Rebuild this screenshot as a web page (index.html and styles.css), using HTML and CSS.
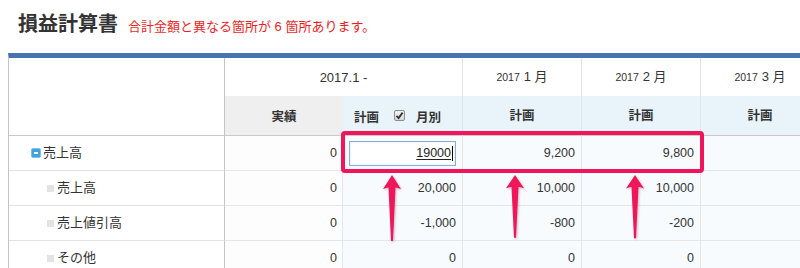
FILE: index.html
```html
<!DOCTYPE html>
<html lang="ja">
<head>
  <meta charset="UTF-8" />
  <meta name="viewport" content="width=device-width,initial-scale=1.0" />
  <title>損益計算書</title>
  <link rel="stylesheet" href="styles.css">
</head>
<body>
  <div class="page">
    <!-- Title -->
    <div class="title-bar">
      <h1 class="title">損益計算書</h1>
      <span class="warning">合計金額と異なる箇所が 6 箇所あります。</span>
    </div>

    <!-- Sheet -->
    <div class="sheet">
      <div class="grid">
        <div class="cell head-blank"></div>
        <div class="cell head-period">2017.1 -</div>
        <div class="cell head-month"><span class="year">2017</span>1 月</div>
        <div class="cell head-month"><span class="year">2017</span>2 月</div>
        <div class="cell head-month"><span class="year">2017</span>3 月</div>

        <div class="cell head-actual">実績</div>
        <div class="cell head-plan head-plan-first">
          <span>計画</span>
          <span class="check">
            <svg width="9" height="9" viewBox="0 0 9 9"><path d="M1.5 4.8 L3.6 7 L7.6 1.6" fill="none" stroke="#333" stroke-width="1.8"/></svg>
          </span>
          <span>月別</span>
        </div>
        <div class="cell head-plan">計画</div>
        <div class="cell head-plan">計画</div>
        <div class="cell head-plan">計画</div>

        <!-- 売上高 (parent) -->
        <div class="cell label label-parent"><span class="toggle"></span>売上高</div>
        <div class="cell num actual">0</div>
        <div class="cell num plan edit"><div class="field"><span class="typed">19000</span><span class="caret"></span></div></div>
        <div class="cell num plan">9,200</div>
        <div class="cell num plan">9,800</div>
        <div class="cell num plan"></div>

        <div class="cell label label-child"><span class="leaf"></span>売上高</div>
        <div class="cell num actual">0</div>
        <div class="cell num plan">20,000</div>
        <div class="cell num plan">10,000</div>
        <div class="cell num plan">10,000</div>
        <div class="cell num plan"></div>

        <div class="cell label label-child"><span class="leaf"></span>売上値引高</div>
        <div class="cell num actual">0</div>
        <div class="cell num plan">-1,000</div>
        <div class="cell num plan">-800</div>
        <div class="cell num plan">-200</div>
        <div class="cell num plan"></div>

        <div class="cell label label-child"><span class="leaf"></span>その他</div>
        <div class="cell num actual">0</div>
        <div class="cell num plan">0</div>
        <div class="cell num plan">0</div>
        <div class="cell num plan">0</div>
        <div class="cell num plan"></div>
      </div>
    </div>

    <!-- Annotation overlay -->
    <svg class="annotation" width="800" height="268" viewBox="0 0 800 268">
      <defs>
        <filter id="shadow" x="-50%" y="-20%" width="200%" height="140%">
          <feDropShadow dx="1" dy="1" stdDeviation="1" flood-color="#000" flood-opacity="0.25"/>
        </filter>
        <path id="arrow" d="M0 0 L9 14 Q5 12.5 3.5 12.5 L1 66 L-1 66 L-3.5 12.5 Q-5 12.5 -9 14 Z"/>
      </defs>
      <rect x="343" y="133" width="359" height="38" rx="2" fill="none" stroke="#f0145a" stroke-width="4"/>
      <g fill="#f0145a" filter="url(#shadow)">
        <use href="#arrow" transform="translate(392 175)"/>
        <use href="#arrow" transform="translate(515 175) scale(1 0.95)"/>
        <use href="#arrow" transform="translate(635 175) scale(1 0.96)"/>
      </g>
    </svg>
  </div>
</body>
</html>
```

FILE: styles.css
```css
/* Base */
body {
  margin: 0;
  padding: 0;
  background: #fff;
  color: #333;
  font-family: "Liberation Sans", "Noto Sans CJK JP", sans-serif;
}

.page {
  position: relative;
  width: 800px;
  height: 268px;
  overflow: hidden;
}

/* Title */
.title-bar {
  height: 53px;
  box-sizing: border-box;
  padding: 11px 0 0 18px;
  display: flex;
  align-items: baseline;
  gap: 10px;
}
.title {
  margin: 0;
  font-size: 20px;
  font-weight: bold;
  line-height: 26px;
  color: #333;
}
.warning {
  font-size: 13px;
  color: #f01e1e;
}

/* Sheet */
.sheet {
  margin-left: 8px;
  border-top: 5px solid #4773b1;
  border-left: 1px solid #c4c4c4;
  overflow: hidden;
}
.grid {
  display: grid;
  grid-template-columns: 216px 118px 120px 119px 119px 119px;
  grid-template-rows: 38px 40px repeat(4, 35px);
}
.cell {
  box-sizing: border-box;
  display: flex;
  align-items: center;
  font-size: 12.5px;
  line-height: 16px;
  white-space: nowrap;
}

/* Header */
.head-blank {
  grid-row: span 2;
  border-right: 1px solid #c4c4c4;
  border-bottom: 1px solid #c9c9c9;
}
.head-period {
  grid-column: span 2;
  justify-content: center;
  font-size: 13px;
  border-right: 1px solid #e3e3e3;
  padding-top: 1px;
}
.head-month {
  justify-content: center;
  font-size: 13px;
  border-right: 1px solid #e3e3e3;
}
.head-month .year {
  font-size: 10.5px;
  margin-right: 4px;
}
.head-actual {
  justify-content: center;
  font-weight: bold;
  background: #efefef;
  border-bottom: 1px solid #c9c9c9;
  padding-top: 3px;
}
.head-plan {
  justify-content: center;
  font-weight: bold;
  background: #e8f3fa;
  border-right: 1px solid #dce8f0;
  border-bottom: 1px solid #c9c9c9;
}
.head-plan-first {
  justify-content: flex-start;
  padding: 4px 0 0 11px;
  gap: 0;
}
.head-plan-first .check {
  margin: 0 11px 0 15px;
}
.check {
  width: 11px;
  height: 11px;
  box-sizing: border-box;
  border: 1px solid #8c8c8c;
  border-radius: 2px;
  background: linear-gradient(#f4f4f4, #d8d8d8);
  display: flex;
  align-items: center;
  justify-content: center;
  position: relative;
  top: -2px;
}

/* Body rows */
.label {
  border-right: 1px solid #c4c4c4;
  border-bottom: 1px solid #e3e3e3;
  font-size: 13px;
}
.label-parent {
  padding-left: 22px;
}
.label-child {
  padding-left: 38px;
}
.toggle {
  width: 10px;
  height: 10px;
  box-sizing: border-box;
  border-radius: 2px;
  background: #3fa3df;
  border: 1px solid #7cc2ec;
  margin-right: 2px;
  position: relative;
}
.toggle::after {
  content: "";
  position: absolute;
  left: 2px;
  top: 3px;
  width: 4px;
  height: 2px;
  background: #fff;
}
.leaf {
  width: 7px;
  height: 7px;
  background: #e3e3e3;
  margin-right: 3px;
}

.num {
  justify-content: flex-end;
  padding-right: 6px;
  border-right: 1px solid #e6e6e6;
  border-bottom: 1px solid #e6e6e6;
}
.actual {
  background: #fdfdfd;
  padding-right: 5px;
}
.plan {
  background: #f7fbfe;
}

/* Editing field */
.edit {
  padding: 0 6px 0 6px;
  justify-content: flex-start;
}
.field {
  width: 107px;
  height: 25px;
  box-sizing: border-box;
  border: 1px solid #8aaedb;
  box-shadow: inset 0 0 2px #c6dbf2;
  background: #fff;
  display: flex;
  align-items: center;
  justify-content: flex-end;
  padding-right: 2px;
  color: #222;
}
.typed {
  text-decoration: underline;
  text-underline-offset: 2px;
}
.caret {
  width: 1px;
  height: 15px;
  background: #000;
  margin-left: 1px;
}

/* Annotation overlay */
.annotation {
  position: absolute;
  top: 0;
  left: 0;
  pointer-events: none;
}
```
